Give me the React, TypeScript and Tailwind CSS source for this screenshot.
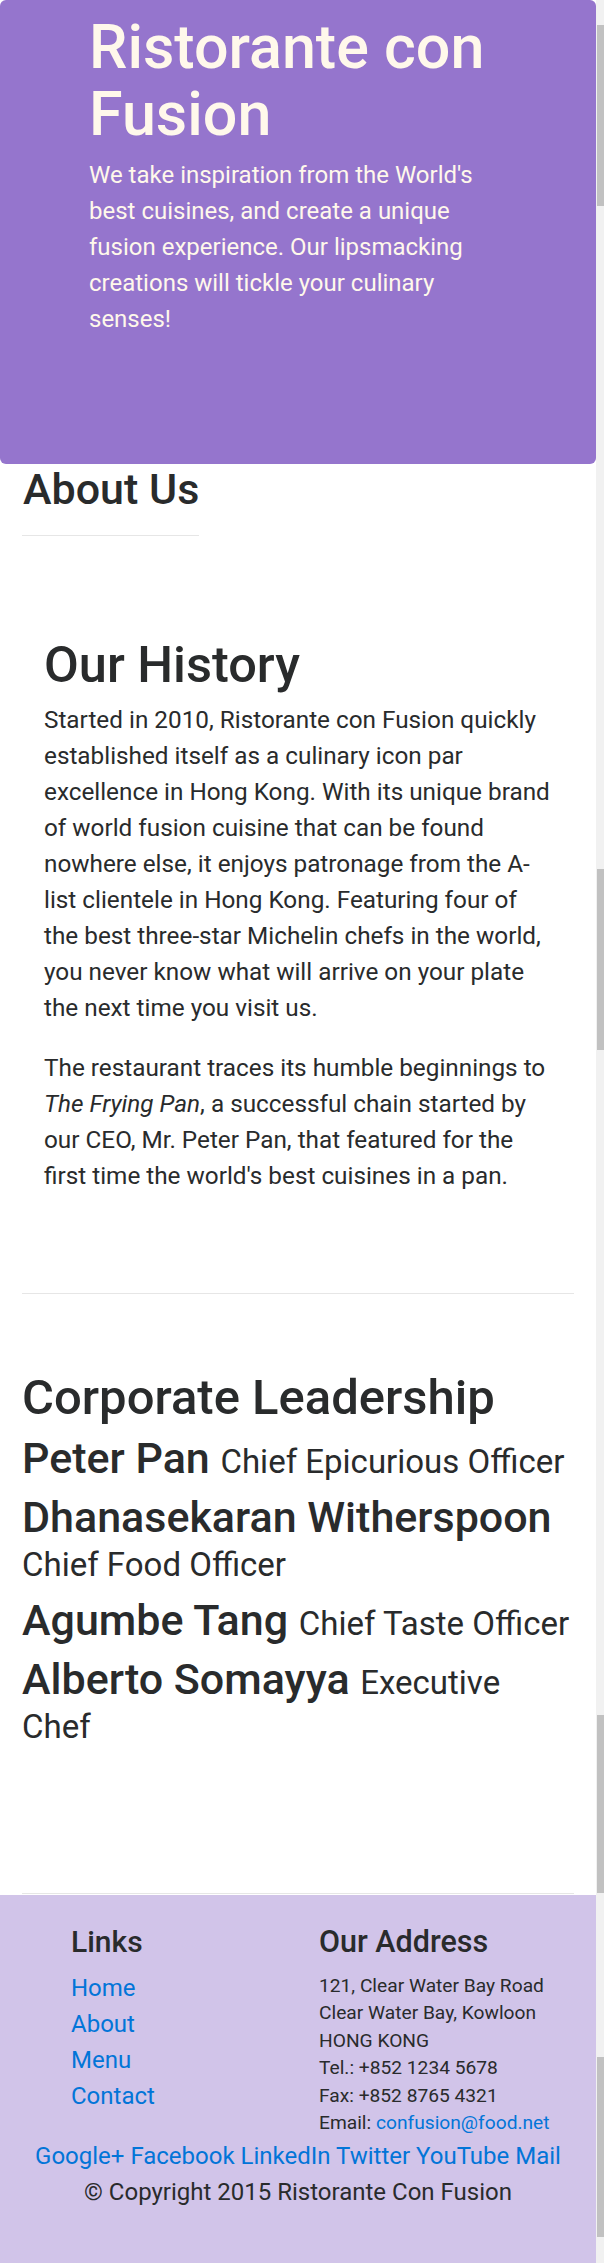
import React from "react";

const leaders: { name: string; title: string }[] = [
  { name: "Peter Pan", title: "Chief Epicurious Officer" },
  { name: "Dhanasekaran Witherspoon", title: "Chief Food Officer" },
  { name: "Agumbe Tang", title: "Chief Taste Officer" },
  { name: "Alberto Somayya", title: "Executive Chef" },
];

const footerLinks = ["Home", "About", "Menu", "Contact"];
const socials = ["Google+", "Facebook", "LinkedIn", "Twitter", "YouTube", "Mail"];

export default function App() {
  return (
    <div className="flex w-[604px] bg-white font-[Roboto,Arial,sans-serif] text-[#292b2c]">
      <div className="w-[596px] shrink-0">
        <header className="h-[464px] rounded-[6px] bg-[#9575cd] pl-[89px] pt-[14.3px] text-[#fff8eb]">
          <div className="w-[410px]">
            <h1 className="text-[61px] font-medium leading-[66.7px]">Ristorante con Fusion</h1>
            <p className="mt-[8.9px] text-[24px] leading-[36px]">
              We take inspiration from the World's best cuisines, and create a unique fusion experience. Our
              lipsmacking creations will tickle your culinary senses!
            </p>
          </div>
        </header>

        <main className="px-[22px]">
          <h2 className="ml-px text-[43px] font-medium leading-[50px]">About Us</h2>
          <hr className="mt-[21px] w-[177px] border-[#e6e6e6]" />

          <section className="mt-[100.4px] px-[22px]">
            <h2 className="text-[50.5px] font-medium leading-[57.6px]">Our History</h2>
            <p className="mt-[7.7px] text-[24.3px] leading-[36px]">
              Started in 2010, Ristorante con Fusion quickly established itself as a culinary icon par excellence in
              Hong Kong. With its unique brand of world fusion cuisine that can be found nowhere else, it enjoys
              patronage from the A-list clientele in Hong Kong. Featuring four of the best three-star Michelin chefs in
              the world, you never know what will arrive on your plate the next time you visit us.
            </p>
            <p className="mt-[24px] text-[24.3px] leading-[36px]">
              The restaurant traces its humble beginnings to <em>The Frying Pan</em>, a successful chain started by our
              CEO, Mr. Peter Pan, that featured for the first time the world's best cuisines in a pan.
            </p>
          </section>

          <hr className="mt-[99px] border-[#e6e6e6]" />

          <h2 className="mt-[75.4px] text-[49px] font-medium leading-[57.6px]">Corporate Leadership</h2>
          <div className="mt-[9.8px] flex flex-col gap-[15px] pr-[4px]">
            {leaders.map((l) => (
              <h4 key={l.name} className="text-[43px] font-medium leading-[44px]">
                {l.name} <span className="text-[33px] font-normal leading-none">{l.title}</span>
              </h4>
            ))}
          </div>

          <hr className="mt-[147.2px] border-[#e6e6e6]" />
        </main>

        <footer className="mt-px h-[368px] bg-[#d1c4e9] pt-[29px]">
          <div className="flex">
            <div className="w-[319px] shrink-0 pl-[71px]">
              <h5 className="text-[30px] font-medium leading-[36px]">Links</h5>
              <ul className="mt-[10px] text-[24px] leading-[36px] text-[#0275d8]">
                {footerLinks.map((t) => (
                  <li key={t}>
                    <a href="#">{t}</a>
                  </li>
                ))}
              </ul>
            </div>
            <div>
              <h5 className="text-[30.5px] font-medium leading-[36px]">Our Address</h5>
              <address className="mt-[12px] text-[19.2px] not-italic leading-[27.5px]">
                121, Clear Water Bay Road
                <br />
                Clear Water Bay, Kowloon
                <br />
                HONG KONG
                <br />
                Tel.: +852 1234 5678
                <br />
                Fax: +852 8765 4321
                <br />
                Email: <a href="#" className="text-[#0275d8]">confusion@food.net</a>
              </address>
            </div>
          </div>
          <div className="mt-[1.4px] text-center text-[24px] leading-[36px] text-[#0275d8]">
            {socials.map((s, i) => (
              <React.Fragment key={s}>
                {i > 0 ? " " : null}
                <a href="#">{s}</a>
              </React.Fragment>
            ))}
          </div>
          <p className="text-center text-[24px] leading-[36px]">© Copyright 2015 Ristorante Con Fusion</p>
        </footer>
      </div>

      <div className="flex w-[8px] shrink-0 flex-col items-end bg-[#f1f1f1]">
        <div className="mt-[25px] h-[181px] w-[7px] bg-[#c1c1c1]" />
        <div className="mt-[663px] h-[181px] w-[7px] bg-[#c1c1c1]" />
        <div className="mt-[665px] h-[178px] w-[7px] bg-[#c1c1c1]" />
        <div className="mt-[164px] h-[180px] w-[7px] bg-[#c1c1c1]" />
      </div>
    </div>
  );
}
